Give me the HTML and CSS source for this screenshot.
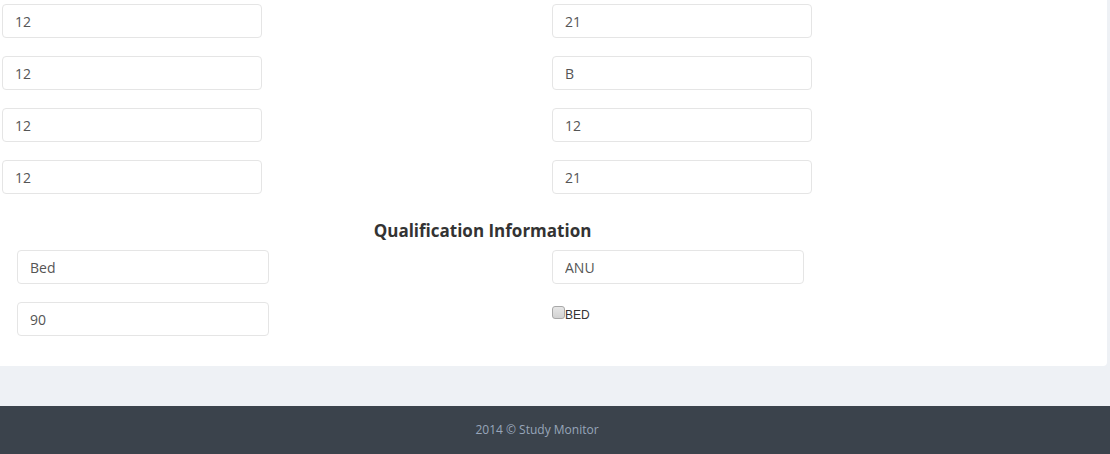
FILE: index.html
```html
<!DOCTYPE html>
<html>
<head>
<meta charset="utf-8">
<link rel="stylesheet" href="styles.css">
</head>
<body>
<div class="panel">
  <div class="grid-top">
    <input class="field" type="text" value="12">
    <input class="field" type="text" value="21">
    <input class="field" type="text" value="12">
    <input class="field" type="text" value="B">
    <input class="field" type="text" value="12">
    <input class="field" type="text" value="12">
    <input class="field" type="text" value="12">
    <input class="field" type="text" value="21">
  </div>
  <h3 class="section-title">Qualification Information</h3>
  <div class="grid-qual">
    <input class="field field-q" type="text" value="Bed">
    <input class="field field-q" type="text" value="ANU">
    <input class="field field-q" type="text" value="90">
    <label class="check"><input type="checkbox" class="check-box"><span class="check-text">BED</span></label>
  </div>
</div>
<div class="spacer"></div>
<footer class="footer">2014 © Study Monitor</footer>
</body>
</html>
```
FILE: styles.css
```css
html, body {
  margin: 0;
  padding: 0;
}
body {
  background: #eef1f5;
  font-family: "Open Sans", "Liberation Sans", sans-serif;
  color: #333;
  width: 1110px;
  height: 454px;
  overflow: hidden;
}
.panel {
  width: 1107px;
  background: #fff;
  border-radius: 0 0 4px 0;
  padding: 4px 0 30px 0;
  box-sizing: border-box;
}
.grid-top {
  display: grid;
  grid-template-columns: 550px 550px;
  row-gap: 18px;
  padding-left: 2px;
}
.field {
  box-sizing: border-box;
  width: 260px;
  height: 34px;
  border: 1px solid #e5e5e5;
  border-radius: 4px;
  padding: 6px 12px;
  font-family: "Open Sans", "Liberation Sans", sans-serif;
  font-size: 14px;
  color: #555;
  background: #fff;
  margin: 0;
  outline: none;
}
.field-q {
  width: 252px;
}
.section-title {
  margin: 0;
  width: 965px;
  height: 56px;
  box-sizing: border-box;
  padding-top: 25px;
  text-align: center;
  font-size: 17px;
  font-weight: 700;
  line-height: 24px;
  color: #333;
}
.grid-qual {
  display: grid;
  grid-template-columns: 535px 535px;
  row-gap: 18px;
  padding-left: 17px;
}
.check {
  display: flex;
  align-items: flex-start;
  font-size: 12px;
  line-height: 14px;
  color: #333;
  padding-top: 4px;
  height: 29px;
  box-sizing: border-box;
}
.check-box {
  -webkit-appearance: none;
  appearance: none;
  margin: 0;
  width: 13px;
  height: 13px;
  box-sizing: border-box;
  border: 1px solid #a8a8a8;
  border-radius: 3px;
  background: linear-gradient(#e6e6e6, #d2d2d2);
}
.check-text {
  padding-top: 2px;
  font-family: "Liberation Sans", Arial, sans-serif;
}
.spacer {
  height: 40px;
}
.footer {
  height: 48px;
  background: #3b434c;
  color: #98a6ba;
  font-size: 12px;
  line-height: 48px;
  text-align: center;
  padding-right: 36px;
  box-sizing: border-box;
}
```
